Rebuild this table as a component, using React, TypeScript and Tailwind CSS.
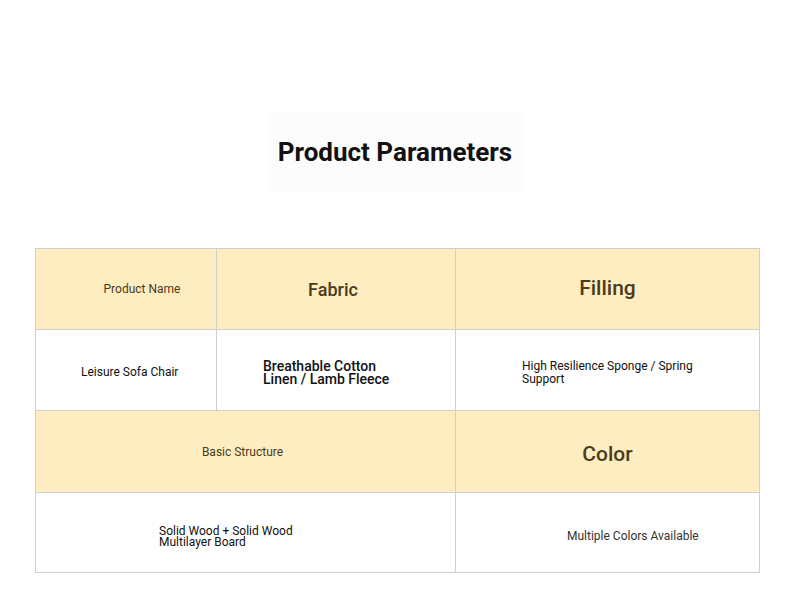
export default function App() {
	return (
		<div className="min-h-[600px] bg-white font-['Roboto',sans-serif]">
			<div className="flex justify-center pt-[112px]">
				<div className="flex h-[80px] w-[256px] items-center justify-center bg-[#fcfcfc]">
					<h1 className="text-[26px] font-bold text-[#111]">Product Parameters</h1>
				</div>
			</div>

			<div className="mt-[56px] ml-[35px] grid w-[725px] grid-cols-[181px_239px_304px] grid-rows-[81px_81px_82px_80px] border-l border-t border-[#cfcfcf]">
				{/* header row */}
				<div className="flex items-center justify-center border-r border-b border-[#cfcfcf] bg-[#fdedc0] pl-[32px] text-[12px] text-[#4b3b1c]">
					Product Name
				</div>
				<div className="flex items-center justify-center border-r border-b border-[#cfcfcf] bg-[#fdedc0] pr-[6px] text-[18px] font-medium text-[#4b3b1c]">
					Fabric
				</div>
				<div className="flex items-center justify-center border-r border-b border-[#cfcfcf] bg-[#fdedc0] text-[21px] font-medium text-[#4b3b1c]">
					Filling
				</div>

				{/* values */}
				<div className="flex items-center border-r border-b border-[#cfcfcf] pt-[3px] pl-[45px] text-[12px] text-[#111]">
					Leisure Sofa Chair
				</div>
				<div className="flex items-center border-r border-b border-[#cfcfcf] pt-[6px] pl-[46px]">
					<p className="w-[140px] text-[14px] leading-[13px] font-medium text-[#111]">
						Breathable Cotton Linen / Lamb Fleece
					</p>
				</div>
				<div className="flex items-center border-r border-b border-[#cfcfcf] pt-[5px] pl-[66px]">
					<p className="w-[185px] text-[12px] leading-[13px] text-[#111]">
						High Resilience Sponge / Spring Support
					</p>
				</div>

				{/* second header */}
				<div className="col-span-2 flex items-center justify-center border-r border-b border-[#cfcfcf] bg-[#fdedc0] pr-[6px] text-[12px] text-[#4b3b1c]">
					Basic Structure
				</div>
				<div className="flex items-center justify-center border-r border-b border-[#cfcfcf] bg-[#fdedc0] pt-[7px] text-[21px] font-medium text-[#4b3b1c]">
					Color
				</div>

				<div className="col-span-2 flex items-center border-r border-b border-[#cfcfcf] pt-[9px] pl-[123px]">
					<p className="w-[145px] text-[12px] leading-[11px] text-[#111]">
						Solid Wood + Solid Wood Multilayer Board
					</p>
				</div>
				<div className="flex items-center border-r border-b border-[#cfcfcf] pt-[7px] pl-[111px] text-[12px] text-[#333]">
					Multiple Colors Available
				</div>
			</div>
		</div>
	)
}
